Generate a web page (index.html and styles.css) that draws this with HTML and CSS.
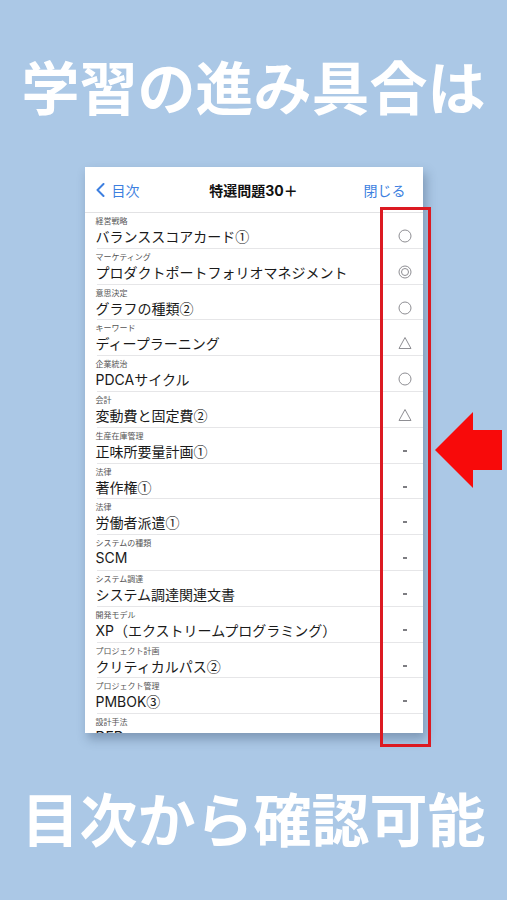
FILE: index.html
```
<html>
<head>
<meta charset="utf-8">
<title>目次から確認可能</title>
<link rel="stylesheet" href="styles.css">
</head>
<body>

<div class="page">

  <h1 class="headline">学習の進み具合は</h1>

  <div class="shot">
    <div class="card">
      <div class="navbar">
        <span class="back">
          <svg width="9" height="14" viewBox="0 0 9 14"><polyline points="7.5,1 1.5,7 7.5,13" fill="none" stroke="#3d7fe0" stroke-width="2" stroke-linecap="round" stroke-linejoin="round"/></svg>
          目次
        </span>
        <span class="title">特選問題<span class="lat">30</span>＋</span>
        <span class="close">閉じる</span>
      </div>

      <div class="row"><div class="text"><div class="cat">経営戦略</div><div class="name">バランススコアカード①</div></div><div class="mark"><svg width="14" height="14"><circle cx="7" cy="7" r="6" fill="none" stroke="#8e8e93" stroke-width="1"/></svg></div></div>
      <div class="row"><div class="text"><div class="cat">マーケティング</div><div class="name">プロダクトポートフォリオマネジメント</div></div><div class="mark"><svg width="14" height="14"><circle cx="7" cy="7" r="6" fill="none" stroke="#8e8e93" stroke-width="1"/><circle cx="7" cy="7" r="3.5" fill="none" stroke="#8e8e93" stroke-width="1"/></svg></div></div>
      <div class="row"><div class="text"><div class="cat">意思決定</div><div class="name">グラフの種類②</div></div><div class="mark"><svg width="14" height="14"><circle cx="7" cy="7" r="6" fill="none" stroke="#8e8e93" stroke-width="1"/></svg></div></div>
      <div class="row"><div class="text"><div class="cat">キーワード</div><div class="name">ディープラーニング</div></div><div class="mark"><svg width="14" height="14"><polygon points="7,1.5 13,12.5 1,12.5" fill="none" stroke="#8e8e93" stroke-width="1"/></svg></div></div>
      <div class="row"><div class="text"><div class="cat">企業統治</div><div class="name"><span class="lat">PDCA</span>サイクル</div></div><div class="mark"><svg width="14" height="14"><circle cx="7" cy="7" r="6" fill="none" stroke="#8e8e93" stroke-width="1"/></svg></div></div>
      <div class="row"><div class="text"><div class="cat">会計</div><div class="name">変動費と固定費②</div></div><div class="mark"><svg width="14" height="14"><polygon points="7,1.5 13,12.5 1,12.5" fill="none" stroke="#8e8e93" stroke-width="1"/></svg></div></div>
      <div class="row"><div class="text"><div class="cat">生産在庫管理</div><div class="name">正味所要量計画①</div></div><div class="mark"><span class="dash"></span></div></div>
      <div class="row"><div class="text"><div class="cat">法律</div><div class="name">著作権①</div></div><div class="mark"><span class="dash"></span></div></div>
      <div class="row"><div class="text"><div class="cat">法律</div><div class="name">労働者派遣①</div></div><div class="mark"><span class="dash"></span></div></div>
      <div class="row"><div class="text"><div class="cat">システムの種類</div><div class="name"><span class="lat">SCM</span></div></div><div class="mark"><span class="dash"></span></div></div>
      <div class="row"><div class="text"><div class="cat">システム調達</div><div class="name">システム調達関連文書</div></div><div class="mark"><span class="dash"></span></div></div>
      <div class="row"><div class="text"><div class="cat">開発モデル</div><div class="name"><span class="lat">XP</span>（エクストリームプログラミング）</div></div><div class="mark"><span class="dash"></span></div></div>
      <div class="row"><div class="text"><div class="cat">プロジェクト計画</div><div class="name">クリティカルパス②</div></div><div class="mark"><span class="dash"></span></div></div>
      <div class="row"><div class="text"><div class="cat">プロジェクト管理</div><div class="name"><span class="lat">PMBOK</span>③</div></div><div class="mark"><span class="dash"></span></div></div>
      <div class="row"><div class="text"><div class="cat">設計手法</div><div class="name"><span class="lat">DFD</span></div></div></div>
    </div>

    <div class="frame"></div>
    <svg class="arrow" width="67" height="80" viewBox="0 0 67 80"><polygon points="0,40 38,2 38,20 67,20 67,60 38,60 38,78" fill="#f80a0a"/></svg>
  </div>

  <h1 class="headline bottom">目次から確認可能</h1>

</div>

</body>
</html>
```

FILE: styles.css
```
body
{
  margin: 0;
  background: #abc8e6;
  font-family: "Noto Sans CJK JP", sans-serif;
}
.page
{
  display: flex;
  flex-direction: column;
  align-items: center;
}
.headline
{
  margin: 0;
  padding-top: 56px;
  font-size: 58px;
  line-height: 58px;
  font-weight: 700;
  color: #fff;
  white-space: nowrap;
}
.headline.bottom
{
  padding-top: 55px;
}
.shot
{
  position: relative;
  margin-top: 53px;
  width: 338px;
  height: 566px;
}
.card
{
  width: 338px;
  height: 566px;
  background: #fff;
  overflow: hidden;
  box-shadow: 3px 6px 10px rgba(40, 60, 90, 0.35);
}
.navbar
{
  height: 45px;
  display: flex;
  align-items: center;
  justify-content: space-between;
  padding: 0 17px 0 11px;
  border-bottom: 1px solid #e2e2e4;
  position: relative;
  font-size: 14px;
  color: #3d7fe0;
}
.back
{
  display: flex;
  align-items: center;
  gap: 7px;
}
.title
{
  position: absolute;
  left: 0;
  right: 0;
  text-align: center;
  font-weight: 700;
  color: #111;
  pointer-events: none;
}
.lat
{
  font-family: "Inter", "Noto Sans CJK JP", sans-serif;
}
.row
{
  margin-left: 12px;
  height: 34.8px;
  display: flex;
  border-bottom: 1px solid #e6e6e8;
}
.text
{
  flex: 1;
  padding-top: 3px;
  margin-left: -1px;
}
.cat
{
  font-size: 8px;
  line-height: 10px;
  color: #555;
}
.name
{
  font-size: 14px;
  line-height: 20px;
  color: #1a1a1a;
  white-space: nowrap;
}
.mark
{
  width: 36px;
  padding-top: 13px;
  height: 20px;
  display: flex;
  align-items: center;
  justify-content: center;
}
.dash
{
  width: 4px;
  height: 2px;
  background: #7d7d82;
}
.frame
{
  position: absolute;
  left: 295px;
  top: 40px;
  width: 45px;
  height: 534px;
  border: 3px solid #dc1a22;
}
.arrow
{
  position: absolute;
  left: 350px;
  top: 243px;
}
```
